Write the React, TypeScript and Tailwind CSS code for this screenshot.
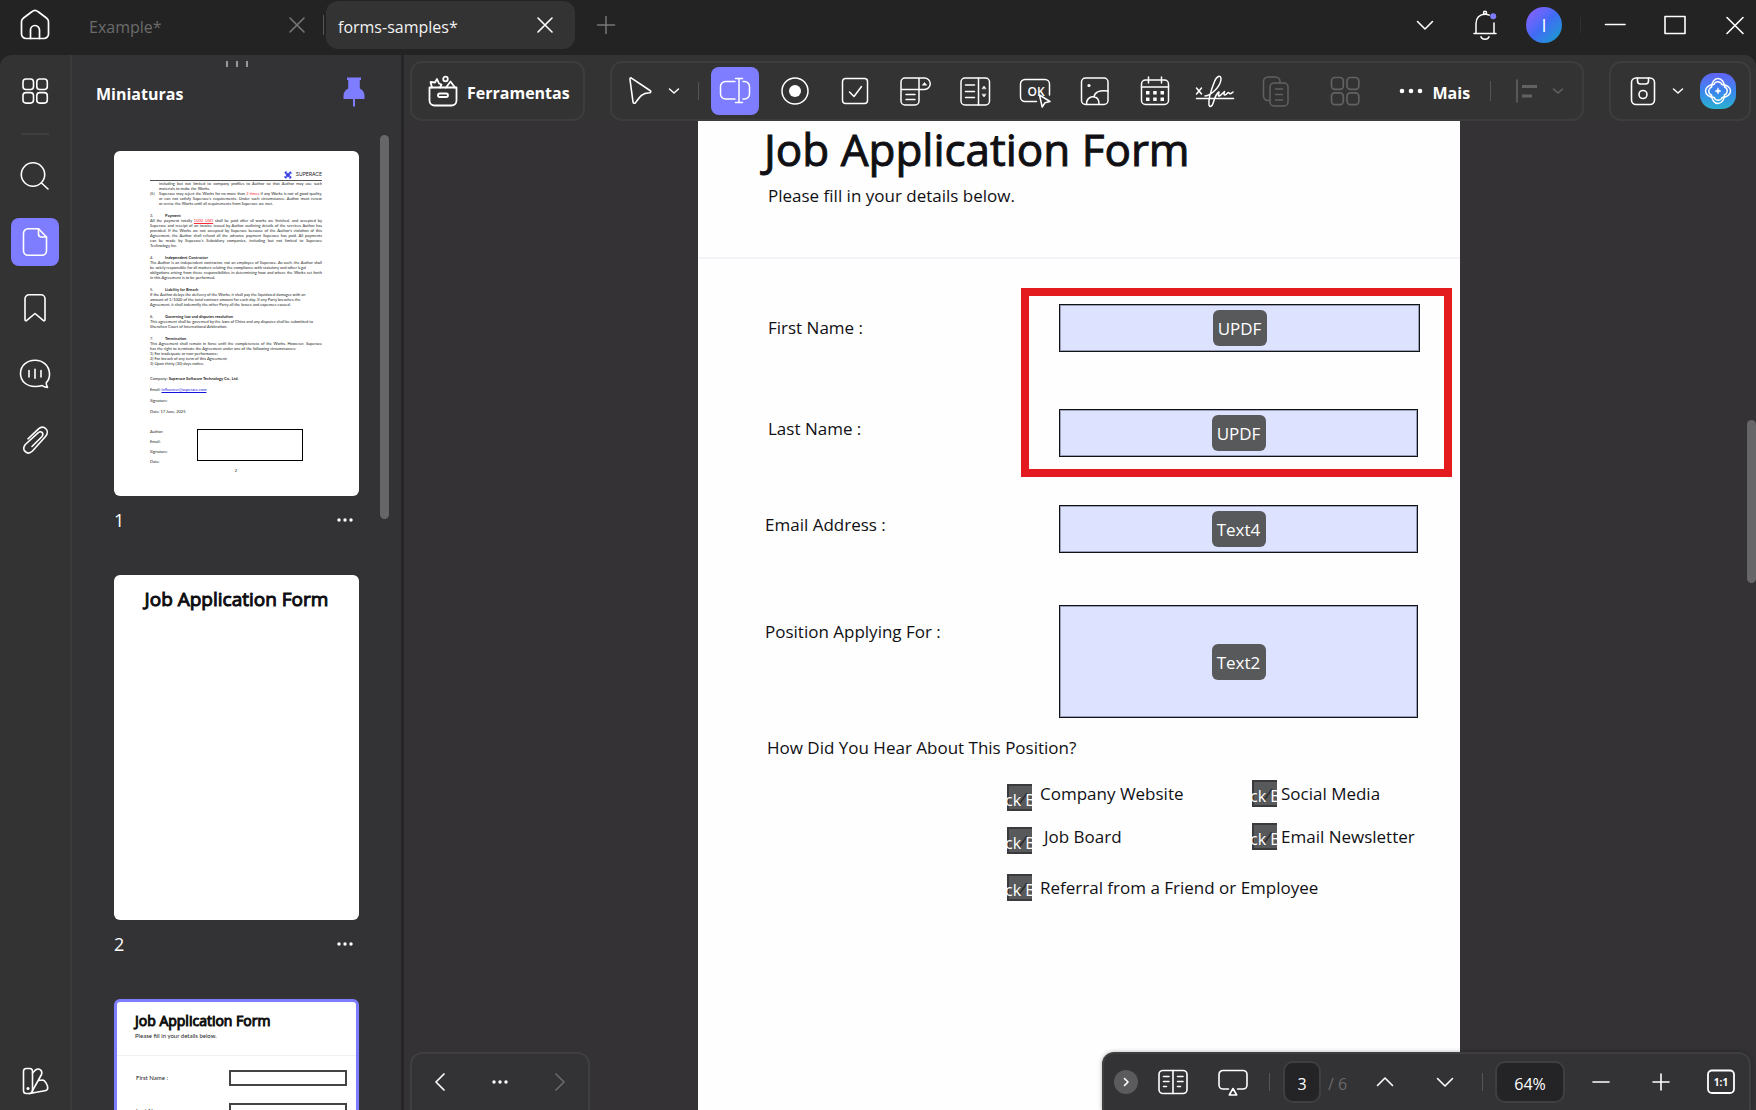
import React from "react";

type IconProps = { children: React.ReactNode; className?: string; w?: number };

/** 32×32 line icon drawn in the current text colour. */
function Icon({ children, className = "size-8", w = 1.6 }: IconProps) {
  return (
    <svg
      viewBox="0 0 32 32"
      className={`shrink-0 ${className}`}
      fill="none"
      stroke="currentColor"
      strokeWidth={w}
      strokeLinecap="round"
      strokeLinejoin="round"
      aria-hidden="true"
    >
      {children}
    </svg>
  );
}

function Btn({
  label,
  className = "",
  children,
}: {
  label: string;
  className?: string;
  children: React.ReactNode;
}) {
  return (
    <button type="button" aria-label={label} className={`flex shrink-0 items-center justify-center ${className}`}>
      {children}
    </button>
  );
}

const Divider = ({ className = "" }: { className?: string }) => (
  <span className={`w-px shrink-0 ${className}`} />
);

const Cross = () => (
  <Icon>
    <path d="M9 9l14 14M23 9L9 23" />
  </Icon>
);

const SmallChevron = () => (
  <Icon className="size-4" w={3}>
    <path d="M7 12l9 8 9-8" />
  </Icon>
);

const FourSquares = () => (
  <>
    <rect x="4" y="4" width="10.5" height="10.5" rx="3" />
    <rect x="17.8" y="4" width="10.5" height="10.5" rx="3" />
    <rect x="4" y="17.6" width="10.5" height="10.5" rx="3" />
    <rect x="17.8" y="17.6" width="10.5" height="10.5" rx="3" />
  </>
);

const Dots = ({ r = 1.6, step = 5.5 }: { r?: number; step?: number }) => (
  <g fill="currentColor" stroke="none">
    <circle cx={16 - step} cy="16" r={r} />
    <circle cx="16" cy="16" r={r} />
    <circle cx={16 + step} cy="16" r={r} />
  </g>
);

/* ---------------------------------------------------------------- title bar */

function TitleBar() {
  return (
    <header className="flex h-[55px] shrink-0 items-start bg-[#232323]">
      <div className="flex h-[50px] w-[326px] items-center">
        <Btn label="Home" className="ml-[19px] text-white">
          <Icon w={1.7}>
            <path d="M2.500 12.800c0-1.500.6-2.600 1.700-3.500l8.600-6.500a5 5 0 0 1 6.400 0l8.600 6.500c1.100.9 1.700 2 1.700 3.500V25a4.500 4.500 0 0 1-4.500 4.500H7A4.500 4.500 0 0 1 2.500 25z" />
            <path d="M11.500 29.500V21a4.500 4.500 0 0 1 9 0v8.500" />
          </Icon>
        </Btn>
        <button type="button" className="ml-[38px] pt-1 text-[16px] leading-6 text-[#6b6b6b]">
          Example*
        </button>
        <Btn label="Close Example" className="ml-auto text-[#777]">
          <Cross />
        </Btn>
        <Divider className="mr-0.5 ml-[10px] h-5 bg-[#555]" />
      </div>
      <div className="mt-px flex h-12 w-[249px] items-center rounded-xl bg-[#333333] pr-3.5 pl-3">
        <button type="button" className="pt-1 text-[16px] leading-6 text-[#f2f2f2]">
          forms-samples*
        </button>
        <Btn label="Close forms-samples" className="ml-auto text-white">
          <Cross />
        </Btn>
      </div>
      <div className="flex h-[50px] flex-1 items-center">
        <Btn label="New tab" className="ml-[15px] text-[#777]">
          <Icon w={1.5}>
            <path d="M16 7.500v17M7.500 16h17" />
          </Icon>
        </Btn>
        <div className="ml-auto flex items-center text-white">
          <Btn label="Tab list">
            <Icon>
              <path d="M8.500 12.500L16 20l7.500-7.500" />
            </Icon>
          </Btn>
          <Btn label="Notifications" className="ml-7">
            <Icon w={1.5}>
              <path d="M5 24.500h22M7 24.500V14.500C7 9 10.500 5.200 16 5.200c1.700 0 3 .3 4.200 1M25 14v10.500" />
              <circle cx="16" cy="3.700" r="1.500" />
              <path d="M12 27.800c1 3.200 7 3.200 8 0" />
              <circle cx="24.200" cy="7.200" r="3" fill="#7f7dff" stroke="none" />
            </Icon>
          </Btn>
          <Btn
            label="Account"
            className="ml-[25px] size-9 rounded-full bg-linear-to-br from-[#8d5cff] via-[#3f6bf5] to-[#00a0c8] text-[18px]"
          >
            I
          </Btn>
          <Divider className="ml-[18px] h-4 bg-[#303030]" />
          <Btn label="Minimize" className="ml-[18px]">
            <Icon w={1.6}>
              <path d="M6.500 15.500h19.500" />
            </Icon>
          </Btn>
          <Btn label="Maximize" className="ml-7">
            <Icon w={1.6}>
              <rect x="6" y="7.500" width="20" height="17" />
            </Icon>
          </Btn>
          <Btn label="Close window" className="mr-[5px] ml-7">
            <Icon w={1.600}>
              <path d="M8 8.500l16 16M24 8.500L8 24.500" />
            </Icon>
          </Btn>
        </div>
      </div>
    </header>
  );
}

/* --------------------------------------------------------------- side rail */

function Rail() {
  return (
    <nav className="flex w-[72px] shrink-0 flex-col items-center border-r-2 border-[#3b3b3b] bg-[#333333] pt-3 text-white">
      <Btn label="All tools" className="size-12">
        <Icon>
          <FourSquares />
        </Icon>
      </Btn>
      <span className="mt-[18px] h-0.5 w-7 bg-[#3f3f3f]" />
      <div className="mt-[17px] flex flex-col gap-[18px]">
        <Btn label="Search" className="size-12">
          <Icon>
            <circle cx="14" cy="14.500" r="11.700" />
            <path d="M22.500 23l6.500 6" />
          </Icon>
        </Btn>
        <Btn label="Thumbnails" className="size-12 rounded-lg bg-[#7f7dff]">
          <Icon>
            <path d="M19.500 2.800H9a4.500 4.500 0 0 0-4.500 4.500v17.400A4.500 4.500 0 0 0 9 29.200h14a4.500 4.500 0 0 0 4.500-4.500V11z" />
            <path d="M19.500 2.800V8a3 3 0 0 0 3 3h5" />
          </Icon>
        </Btn>
        <Btn label="Bookmarks" className="size-12">
          <Icon>
            <path d="M6 6.800a4 4 0 0 1 4-4h12a4 4 0 0 1 4 4v20.700c0 1.200-1 1.600-1.800.9L16 21.500l-8.200 6.900C7 29.100 6 28.700 6 27.500z" />
          </Icon>
        </Btn>
        <Btn label="Comments" className="size-12">
          <Icon>
            <path d="M27.200 24.800c2.300-2.200 3.500-5.300 3.300-9.300C30 7.500 24 2.300 16 2.300S1.500 7.500 1.500 15.500 8 28.500 16 28.500c2.600 0 5-.2 7.200-.9 1.500 1 3.500 1.800 5.300 1.800-.8-1.500-1.300-3-1.300-4.600z" />
            <path d="M10 12.500v6.500M16 11.200v9M22 12.500v6.500" />
          </Icon>
        </Btn>
        <Btn label="Attachments" className="size-12">
          <Icon>
            <path d="M9 14.800L19 5.300c6-5.300 12.500 1.500 7.500 7.200L13.500 27c-5.300 5-11.500-1-7.200-6.500L19 8.800c3.600-2.600 6.400.8 3.800 4L13 22.500" />
          </Icon>
        </Btn>
      </div>
      <Btn label="Theme" className="mt-auto mb-[5px] size-12">
        <Icon>
          <rect x="4.500" y="3.500" width="9" height="25" rx="2.800" />
          <path d="M13.500 8l3-3c3.500-2.500 7.500.5 6 4.500L13 26.500M19.500 15.500l4.200-.5c2 0 5.500 5.500 5 8.300-.2 1.300-1.500 2.200-3 2.500L10.500 28.500" />
          <circle cx="9" cy="23.500" r=".8" fill="currentColor" />
        </Icon>
      </Btn>
    </nav>
  );
}

/* -------------------------------------------------------------- thumbnails */

const agreement: { title?: string; no?: string; lines: React.ReactNode[]; indent?: boolean; loose?: number[] }[] = [
  {
    indent: true,
    loose: [1, 4],
    lines: [
      "including but not limited to company profiles to Author so that Author may use such",
      "materials to make the Works.",
      <>
        Superace may reject the Works for no more than <span className="text-red-500">2 times</span> if any Works is not of good quality,
      </>,
      "or can not satisfy Superace's requirements. Under such circumstance, Author must renew",
      "or revise the Works until all requirements from Superace are met.",
    ],
  },
  {
    no: "3.",
    title: "Payment",
    loose: [5],
    lines: [
      <>
        All the payment totally <span className="text-red-500 underline">1000 USD</span> shall be paid after all works are finished, and accepted by
      </>,
      "Superace and receipt of an invoice issued by Author outlining details of the services Author has",
      "provided. If the Works are not accepted by Superace because of the Author's violation of this",
      "Agreement, the Author shall refund all the advance payment Superace has paid. All payments",
      "can be made by Superace's Subsidiary companies, including but not limited to Superace",
      "Technology Inc.",
    ],
  },
  {
    no: "4.",
    title: "Independent Contractor",
    loose: [1, 3],
    lines: [
      "The Author is an independent contractor, not an employee of Superace. As such, the Author shall",
      "be solely responsible for all matters relating the compliance with statutory and other legal",
      "obligations arising from these responsibilities in determining how and where the Works set forth",
      "in this Agreement is to be performed.",
    ],
  },
  {
    no: "5.",
    title: "Liability for Breach",
    loose: [0, 1, 2],
    lines: [
      "If the Author delays the delivery of the Works, it shall pay the liquidated damages with an",
      "amount of 1/1000 of the total contract amount for each day. If any Party breaches the",
      "Agreement, it shall indemnify the other Party all the losses and expenses caused.",
    ],
  },
  {
    no: "6.",
    title: "Governing law and disputes resolution",
    loose: [0, 1],
    lines: [
      "This agreement shall be governed by the laws of China and any disputes shall be submitted to",
      "Shenzhen Court of International Arbitration.",
    ],
  },
  {
    no: "7.",
    title: "Termination",
    loose: [1, 2, 3, 4],
    lines: [
      "This Agreement shall remain in force until the completeness of the Works. However, Superace",
      "has the right to terminate the Agreement under one of the following circumstances:",
      "1) For inadequate or non-performance;",
      "2) For breach of any term of this Agreement;",
      "3) Upon thirty (30) days notice.",
    ],
  },
];

function AgreementThumb() {
  return (
    <div className="h-[345px] w-full overflow-hidden rounded-md bg-white pt-[18px] pr-[37px] pl-9 font-['Lato',sans-serif] text-[4px] leading-[5px] text-[#222]">
      <div className="flex h-3 items-center justify-end gap-1 border-b border-[#555] font-['Inter',sans-serif] text-[5px]">
        <svg viewBox="0 0 8 8" className="size-2" aria-hidden="true">
          <path d="M1 1l6 6M7 1L1 7" stroke="#3b3fe0" strokeWidth="2.200" />
          <path d="M2.500 0v3M5.500 8V5M0 5.500h3M8 2.500H5" stroke="#6a7bff" strokeWidth=".8" />
        </svg>
        SUPERACE
      </div>
      <div className="flex flex-col gap-[7px]">
        {agreement.map((s, i) => (
          <div key={i} className={s.indent ? "flex" : ""}>
            {s.indent && <span className="w-[9px] shrink-0 pt-[10px]">(5)</span>}
            {s.title && (
              <p className="flex whitespace-nowrap">
                <span className="w-[15px]">{s.no}</span>
                <b>{s.title}</b>
              </p>
            )}
            <div className="min-w-0 flex-1">
              {s.lines.map((l, j) => (
                <p
                  key={j}
                  className={
                    s.loose?.includes(j) ? "whitespace-nowrap" : "whitespace-nowrap [text-align-last:justify]"
                  }
                >
                  {l}
                </p>
              ))}
            </div>
          </div>
        ))}
      </div>
      <div className="mt-[10px] flex flex-col gap-[6px] whitespace-nowrap">
        <p>
          Company: <b>Superace Software Technology Co., Ltd.</b>
        </p>
        <p>
          Email: <span className="text-[#1414e0] underline">influencer@superace.com</span>
        </p>
        <p>Signature:</p>
        <p>Date: 17 June, 2025</p>
      </div>
      <div className="mt-[15px] flex">
        <div className="flex w-[47px] flex-col gap-[5px]">
          <p>Author:</p>
          <p>Email:</p>
          <p>Signature:</p>
          <p>Date:</p>
        </div>
        <div className="h-8 w-[106px] border border-black" />
      </div>
      <p className="mt-1 text-center">2</p>
    </div>
  );
}

function FormThumb() {
  return (
    <div className="h-[345px] w-full overflow-hidden rounded-md border-[3px] border-[#7f7dff] bg-white font-['Lato',sans-serif] text-[6px] leading-[10px] text-[#222]">
      <div className="h-[54px] border-b border-[#f0f0f0] pt-[9px] pl-[18px]">
        <p className="font-['Open_Sans',sans-serif] text-[14px] leading-5 text-[#111] [-webkit-text-stroke:1px]">
          Job Application Form
        </p>
        <p>Please fill in your details below.</p>
      </div>
      <div className="mt-[14px] mr-[9px] ml-[19px] flex flex-col gap-[17px]">
        {["First Name :", "Last Name :", "Email Address :"].map((t) => (
          <div key={t} className="flex items-center justify-between">
            <span>{t}</span>
            <span className="h-4 w-[118px] border-2 border-[#444]" />
          </div>
        ))}
      </div>
    </div>
  );
}

function Thumb({ page, children }: { page: number; children: React.ReactNode }) {
  return (
    <li>
      {children}
      <div className="flex h-[79px] items-start justify-between pt-3 pr-0.5 text-[18px] leading-6 text-white">
        <span>{page}</span>
        <Btn label={`Page ${page} options`} className="h-6 w-6">
          <Icon className="size-8">
            <Dots r={1.700} step={6} />
          </Icon>
        </Btn>
      </div>
    </li>
  );
}

function ThumbPanel() {
  return (
    <aside className="flex w-[332px] shrink-0 flex-col border-r-[3px] border-[#262528] bg-[#333234]">
      <div className="flex h-3 items-end justify-center gap-2">
        <span className="h-1.5 w-0.5 bg-[#999]" />
        <span className="h-1.5 w-0.5 bg-[#999]" />
        <span className="h-1.5 w-0.5 bg-[#999]" />
      </div>
      <div className="flex h-[50px] items-center justify-between pr-[31px] pl-6 text-white">
        <h2 className="pt-1 text-[16px] leading-6 font-bold">Miniaturas</h2>
        <Btn label="Pin panel" className="text-[#7f7dff]">
          <svg viewBox="0 0 32 32" className="size-8" fill="currentColor" aria-hidden="true">
            <path d="M9 1.500h14V4h-1.200v8.500c3 1.400 4.700 4 4.700 7.500V23H17v7.500h-2V23H5.500v-3c0-3.500 1.700-6.100 4.700-7.500V4H9z" />
          </svg>
        </Btn>
      </div>
      <div className="flex min-h-0 flex-1 justify-between overflow-hidden pt-[18px] pr-3 pl-[42px]">
        <ul className="mt-4 w-[245px]">
          <Thumb page={1}>
            <AgreementThumb />
          </Thumb>
          <Thumb page={2}>
            <div className="h-[345px] w-full rounded-md bg-white pt-3 text-center text-[19px] leading-6 text-[#0c0c10] [-webkit-text-stroke:1px]">
              Job Application Form
            </div>
          </Thumb>
          <Thumb page={3}>
            <FormThumb />
          </Thumb>
        </ul>
        <span className="h-[384px] w-[9px] rounded-full bg-[#666567]" />
      </div>
    </aside>
  );
}

/* ----------------------------------------------------------------- toolbar */

const formTools: { label: string; icon: React.ReactNode; active?: boolean; off?: boolean }[] = [
  {
    label: "Text field",
    active: true,
    icon: (
      <>
        <path d="M16 6.500H6.500A5 5 0 0 0 1.500 11.500v7.500a5 5 0 0 0 5 5H16M24 6.500h1.500A5 5 0 0 1 30.500 11.500v7.500a5 5 0 0 1-5 5H24" />
        <path d="M16.500 3.500h7M16.500 27.500h7M20 3.500v24" />
      </>
    ),
  },
  {
    label: "Radio button",
    icon: (
      <>
        <circle cx="16" cy="16" r="13" />
        <circle cx="16" cy="16" r="6" fill="currentColor" stroke="none" />
      </>
    ),
  },
  {
    label: "Check box",
    icon: (
      <>
        <rect x="3.500" y="3.500" width="25" height="25" rx="3" />
        <path d="M10.500 17l4.500 4.500 7.500-10" />
      </>
    ),
  },
  {
    label: "Dropdown",
    icon: (
      <>
        <path d="M20 14.500V26a4 4 0 0 1-4 4H6a4 4 0 0 1-4-4V7a4 4 0 0 1 4-4h19.500a5.700 5.700 0 0 1 0 11.500H2M20 3v11.500M7 19.500h9M7 24.500h9" />
        <path d="M23.500 10l2-2.500 2 2.500z" fill="currentColor" strokeWidth=".6" />
      </>
    ),
  },
  {
    label: "List box",
    icon: (
      <>
        <rect x="2" y="3" width="28.500" height="27" rx="4" />
        <path d="M19.500 3v27M6.500 10h9M6.500 16.500h9M6.500 22.500h9" />
        <path d="M23.200 13.500l1.800-2.500 1.800 2.500zM23.200 19.500l1.800 2.500 1.800-2.500z" fill="currentColor" strokeWidth=".6" />
      </>
    ),
  },
  {
    label: "Button",
    icon: (
      <>
        <path d="M17.500 26.500H6a4.500 4.500 0 0 1-4.500-4.500V9A4.500 4.500 0 0 1 6 4.500h20A4.500 4.500 0 0 1 30.500 9v11" />
        <path d="M20.500 20l10.500 6.500-5 1.200-2.800 4.300z" />
        <text x="8.500" y="20.500" fontSize="12" fontWeight="600" fontFamily="Open Sans" fill="currentColor" stroke="none">
          OK
        </text>
      </>
    ),
  },
  {
    label: "Image",
    icon: (
      <>
        <rect x="2.500" y="3" width="26.500" height="26.500" rx="4" />
        <path d="M7.500 29c0-6 5-8.500 9.500-6.500 2 1 3 3 3 6.500M15 22c.5-4 4.500-7.500 14-6" />
        <circle cx="10" cy="10.500" r="1.600" fill="currentColor" stroke="none" />
      </>
    ),
  },
  {
    label: "Date",
    icon: (
      <>
        <rect x="2.500" y="5" width="27" height="24.500" rx="4" />
        <path d="M2.500 12h27M9.500 2v6M22.500 2v6" />
        <g fill="currentColor" stroke="none">
          <rect x="7" y="16" width="3.500" height="3.500" />
          <rect x="14.200" y="16" width="3.500" height="3.500" />
          <rect x="21.500" y="16" width="3.500" height="3.500" />
          <rect x="7" y="22.500" width="3.500" height="3.500" />
          <rect x="14.200" y="22.500" width="3.500" height="3.500" />
          <rect x="21.500" y="22.500" width="3.500" height="3.500" />
        </g>
      </>
    ),
  },
  {
    label: "Signature",
    icon: (
      <path d="M-2.500 13l5 6M2.500 13l-5 6M-2.500 23.500h37M6 21c6-.5 15.500-9 16-17 .2-4.500-4.500-3-6.500 2.500C12.500 14 9 23.500 10 30c.8 2.500 3 1.500 4-1.500 1.500-4 2-9 6-11.500 0 2.500-1.500 4.500.5 4 2-.8 3-3 5-4.500-.5 2-1 3.500.5 3.500 1.500-.2 2.500-2.500 3.500-2.500.8 0 .5 1.500 1.500 1.300 1 0 2-1 3-1.800" />
    ),
  },
  {
    label: "Duplicate",
    off: true,
    icon: (
      <>
        <path d="M10 25.500H9a4.500 4.500 0 0 1-4.500-4.500V6.500A4.500 4.500 0 0 1 9 2h7.500a4.500 4.500 0 0 1 4.500 4.500v1" />
        <rect x="11" y="8" width="18" height="23" rx="4" />
        <path d="M16.500 14h7M16.500 19.500h7M16.500 25h7" />
      </>
    ),
  },
];

function Toolbar() {
  const box = "flex h-[60px] shrink-0 items-center rounded-xl border-2 border-[#3d3d3d] bg-[#333333]";
  return (
    <div className="flex shrink-0 justify-between bg-[#333333] pt-[6px] pr-[5px] pl-[6px] text-white">
      <button type="button" className={`${box} gap-2 pr-[13px] pl-[15px] text-[16px] font-bold`}>
        <Icon w={1.800}>
          <path d="M2.500 12.500h27v13a5 5 0 0 1-5 5h-17a5 5 0 0 1-5-5z" />
          <rect x="11" y="18.500" width="10" height="3.500" rx="1.700" />
          <path d="M5 12.500L3.500 7l4.500.5 2-3.500 2 4.500 2.500 1-1.500 3M19 12.500l4.500-6 4.500 6" />
          <circle cx="18.500" cy="4" r="2.300" />
        </Icon>
        <span className="pt-1">Ferramentas</span>
      </button>

      <div className={`${box} pl-[11px]`}>
        <Btn label="Select">
          <Icon>
            <path d="M7 4.500c-.3-1.500.8-2 1.800-1.200L27 15.500c1.300 1 .8 2.200-.5 2.300-3.300.1-6 .9-8 2.600-2 1.800-3.800 4.300-5.800 7-1 1.300-2.500 1.200-2.700-.4z" />
          </Icon>
        </Btn>
        <Btn label="Select options" className="ml-[11px]">
          <SmallChevron />
        </Btn>
        <Divider className="mr-3 ml-4 h-[18px] bg-[#555]" />
        <div className="flex gap-3">
          {formTools.map((t) => (
            <Btn
              key={t.label}
              label={t.label}
              className={
                t.active ? "size-12 rounded-lg bg-[#7f7dff]" : t.off ? "size-12 text-[#626262]" : "size-12"
              }
            >
              <Icon w={1.500} className="size-8 overflow-visible">
                {t.icon}
              </Icon>
            </Btn>
          ))}
        </div>
        <Btn label="Organize fields" className="ml-[22px] size-12 text-[#626262]">
          <Icon w={1.500} className="size-9">
            <FourSquares />
          </Icon>
        </Btn>
        <button type="button" className="ml-[26px] flex items-center gap-1.5 text-[16px] font-bold">
          <Icon>
            <Dots r={2.300} step={9} />
          </Icon>
          <span className="pt-1">Mais</span>
        </button>
        <Divider className="ml-5 h-5 bg-[#555]" />
        <Btn label="Align" className="ml-5 text-[#626262]">
          <Icon>
            <path d="M6 5v22" />
            <path d="M11 11.500h15M11 21h10" strokeWidth="3" strokeLinecap="butt" />
          </Icon>
        </Btn>
        <Btn label="Align options" className="mr-4 ml-[7px] text-[#626262]">
          <SmallChevron />
        </Btn>
      </div>

      <div className={`${box} pr-[13px] pl-4`}>
        <Btn label="Save">
          <Icon>
            <rect x="4.500" y="3" width="23" height="26.500" rx="4.500" />
            <path d="M10.500 3v3a3 3 0 0 0 3 3h5a3 3 0 0 0 3-3V3" />
            <circle cx="16" cy="19.500" r="4" />
          </Icon>
        </Btn>
        <Btn label="Save options" className="ml-[11px]">
          <SmallChevron />
        </Btn>
        <Btn
          label="AI assistant"
          className="ml-[14px] size-9 rounded-[14px] bg-linear-to-b from-[#5f62f5] via-[#3a86ee] to-[#2bb0cf]"
        >
          <Icon w={1.500}>
            {[0, 90, 180, 270].map((a) => (
              <path
                key={a}
                transform={`rotate(${a} 16 16)`}
                d="M9.500 12.500c0-5 2.800-9 6.500-9s6.500 4 6.500 8.500M12 9c1.500-2.600 5-3.200 7.500-.5"
              />
            ))}
            <path d="M16 13l.9 2.100 2.100.9-2.100.9L16 19l-.9-2.100L13 16l2.100-.9z" fill="currentColor" strokeWidth=".5" />
          </Icon>
        </Btn>
      </div>
    </div>
  );
}

/* ---------------------------------------------------------------- document */

function TextField({
  id,
  label,
  name,
  row,
  field,
}: {
  id: string;
  label: string;
  name: string;
  row: string;
  field: string;
}) {
  return (
    <div className={`flex items-start justify-between ${row}`}>
      <label htmlFor={id}>{label}</label>
      <div className={`grid place-items-center text-white ${field}`}>
        <input
          id={id}
          type="text"
          className="col-start-1 row-start-1 h-full w-full border border-[#111118] bg-[#dde2ff] shadow-[inset_0_0_0_1px_#9a9fb8] outline-none"
        />
        <span className="pointer-events-none col-start-1 row-start-1 flex h-9 w-[54px] items-center justify-center rounded-md bg-[#58595b] pt-0.5">
          {name}
        </span>
      </div>
    </div>
  );
}

function CheckField({ id, label, row }: { id: string; label: string; row: string }) {
  return (
    <div className={`flex h-[27px] leading-5 whitespace-nowrap ${row}`}>
      <span className="grid size-[27px] shrink-0 place-items-center overflow-hidden text-white">
        <input
          id={id}
          type="checkbox"
          className="col-start-1 row-start-1 size-[27px] appearance-none border-2 border-[#3a3a3c] bg-[#58595b]"
        />
        <svg viewBox="0 0 24 24" className="pointer-events-none col-start-1 row-start-1 size-6" aria-hidden="true">
          <path d="M9 15l3 2 7-10" fill="none" stroke="#2e2e30" strokeWidth="1.500" />
        </svg>
        <span aria-hidden="true" className="pointer-events-none col-start-1 row-start-1 pt-1 text-[16px]">
          ck B
        </span>
      </span>
      <label htmlFor={id}>{label}</label>
    </div>
  );
}

function DocumentPage() {
  return (
    <article className="w-[762px] shrink-0 bg-[#fefefe] text-[17px] leading-6 text-[#101014]">
      <header className="h-[138px] border-b-2 border-[#f4f4f8] pl-[66px]">
        <h1 className="text-[44px] leading-[56px] [-webkit-text-stroke:1px]">Job Application Form</h1>
        <p className="pt-[7px] pl-1">Please fill in your details below.</p>
      </header>
      <form>
        <div className="relative mt-[45px] pr-10 pl-[70px]">
          <TextField id="first" label="First Name :" name="UPDF" row="[&>label]:pt-3" field="h-12 w-[361px]" />
          <TextField
            id="last"
            label="Last Name :"
            name="UPDF"
            row="mt-[57px] [&>label]:pt-2"
            field="mr-0.5 h-12 w-[359px]"
          />
          <span className="pointer-events-none absolute -top-4 right-2 -bottom-5 left-[323px] border-8 border-[#e41b1e]" />
        </div>
        <div className="pr-[42px] pl-[67px]">
          <TextField id="email" label="Email Address :" name="Text4" row="mt-12 [&>label]:pt-2" field="h-12 w-[359px]" />
          <TextField
            id="position"
            label="Position Applying For :"
            name="Text2"
            row="mt-[52px] [&>label]:pt-[15px]"
            field="h-[113px] w-[359px]"
          />
        </div>
        <fieldset className="pl-[69px]">
          <legend className="pt-[18px]">How Did You Hear About This Position?</legend>
          <div className="flex pt-5 pl-[238px]">
            <div className="flex w-[245px] flex-col gap-4 pt-1">
              <CheckField id="web" label="Company Website" row="items-start gap-2" />
              <CheckField id="board" label="Job Board" row="items-start gap-3" />
              <div className="pt-1">
                <CheckField id="referral" label="Referral from a Friend or Employee" row="items-center gap-2" />
              </div>
            </div>
            <div className="flex flex-col gap-4">
              <CheckField id="social" label="Social Media" row="items-center gap-1" />
              <CheckField id="news" label="Email Newsletter" row="items-center gap-1" />
            </div>
          </div>
        </fieldset>
      </form>
    </article>
  );
}

/* ------------------------------------------------------------- bottom bars */

function HistoryBar() {
  return (
    <div className="absolute bottom-0 left-[6px] flex h-[58px] w-[180px] items-center justify-between rounded-t-xl border-2 border-b-0 border-[#3f3e40] bg-[#333234] px-3 text-white">
      <Btn label="Back">
        <Icon w={1.700}>
          <path d="M20 8l-8 8 8 8" />
        </Icon>
      </Btn>
      <Btn label="History">
        <Icon>
          <Dots r={1.700} step={6} />
        </Icon>
      </Btn>
      <Btn label="Forward" className="text-[#6a696b]">
        <Icon w={1.700}>
          <path d="M12 8l8 8-8 8" />
        </Icon>
      </Btn>
    </div>
  );
}

function PageBar() {
  return (
    <div className="absolute right-[5px] bottom-0 flex h-[58px] items-center rounded-t-xl border-2 border-b-0 border-[#3f3e40] bg-[#333234] text-[16px] text-white shadow-[0_0_4px_rgba(0,0,0,0.3)]">
      <Btn label="Collapse bar" className="ml-[10px] size-6 rounded-full bg-[#5b5a5d]">
        <Icon className="size-4" w={3.200}>
          <path d="M13 9l7 7-7 7" />
        </Icon>
      </Btn>
      <Btn label="Page view" className="ml-[19px]">
        <Icon>
          <rect x="2" y="4.500" width="28" height="23" rx="4" />
          <path d="M16 4.500v23M6.500 10.500h5.500M6.500 15.500h5.500M6.500 20.500h3M20.500 10.500h5.500M20.500 15.500h5.500M20.500 20.500h3" />
        </Icon>
      </Btn>
      <Btn label="Present" className="ml-7">
        <Icon>
          <path d="M11.500 23H6a4 4 0 0 1-4-4V8.500a4 4 0 0 1 4-4h20a4 4 0 0 1 4 4V19a4 4 0 0 1-4 4h-5.500" />
          <path d="M16 22.500l3.700 6.500h-7.400z" />
        </Icon>
      </Btn>
      <Divider className="ml-5 h-[18px] bg-[#555]" />
      <input
        aria-label="Page number"
        defaultValue="3"
        className="ml-[13px] h-[42px] w-[38px] rounded-[10px] border-2 border-[#3f3e40] bg-[#242326] pt-1 text-center"
      />
      <span className="ml-[7px] w-6 pt-1 text-[#6a696b]">/ 6</span>
      <Btn label="Previous page" className="ml-[17px]">
        <Icon>
          <path d="M8.500 19.500L16 12l7.500 7.500" />
        </Icon>
      </Btn>
      <Btn label="Next page" className="ml-7">
        <Icon>
          <path d="M8.500 12.500L16 20l7.500-7.500" />
        </Icon>
      </Btn>
      <Divider className="ml-[21px] h-[18px] bg-[#555]" />
      <input
        aria-label="Zoom"
        defaultValue="64%"
        className="ml-[12px] h-[42px] w-[70px] rounded-[10px] border-2 border-[#3f3e40] bg-[#242326] pt-1 text-center"
      />
      <Btn label="Zoom out" className="ml-5">
        <Icon>
          <path d="M8 16h16" />
        </Icon>
      </Btn>
      <Btn label="Zoom in" className="ml-7">
        <Icon>
          <path d="M16 8v16M8 16h16" />
        </Icon>
      </Btn>
      <Btn label="Actual size" className="mr-3 ml-7">
        <Icon w={1.800}>
          <rect x="3" y="4.500" width="26" height="22.500" rx="4" />
          <text x="16" y="19.500" textAnchor="middle" fontSize="10" fontWeight="700" fontFamily="Open Sans" fill="currentColor" stroke="none">
            1:1
          </text>
        </Icon>
      </Btn>
    </div>
  );
}

export default function App() {
  return (
    <div className="flex h-screen flex-col overflow-hidden bg-[#232323] font-['Open_Sans','Noto_Sans',sans-serif]">
      <TitleBar />
      <div className="flex min-h-0 flex-1 overflow-hidden rounded-t-xl">
        <Rail />
        <ThumbPanel />
        <main className="relative flex min-w-0 flex-1 flex-col bg-[#343235]">
          <Toolbar />
          <div className="flex min-h-0 flex-1 justify-center overflow-hidden pr-0.5">
            <DocumentPage />
          </div>
          <span className="absolute top-[365px] right-0 h-[163px] w-[9px] rounded-full bg-[#666567]" />
          <HistoryBar />
          <PageBar />
        </main>
      </div>
    </div>
  );
}
